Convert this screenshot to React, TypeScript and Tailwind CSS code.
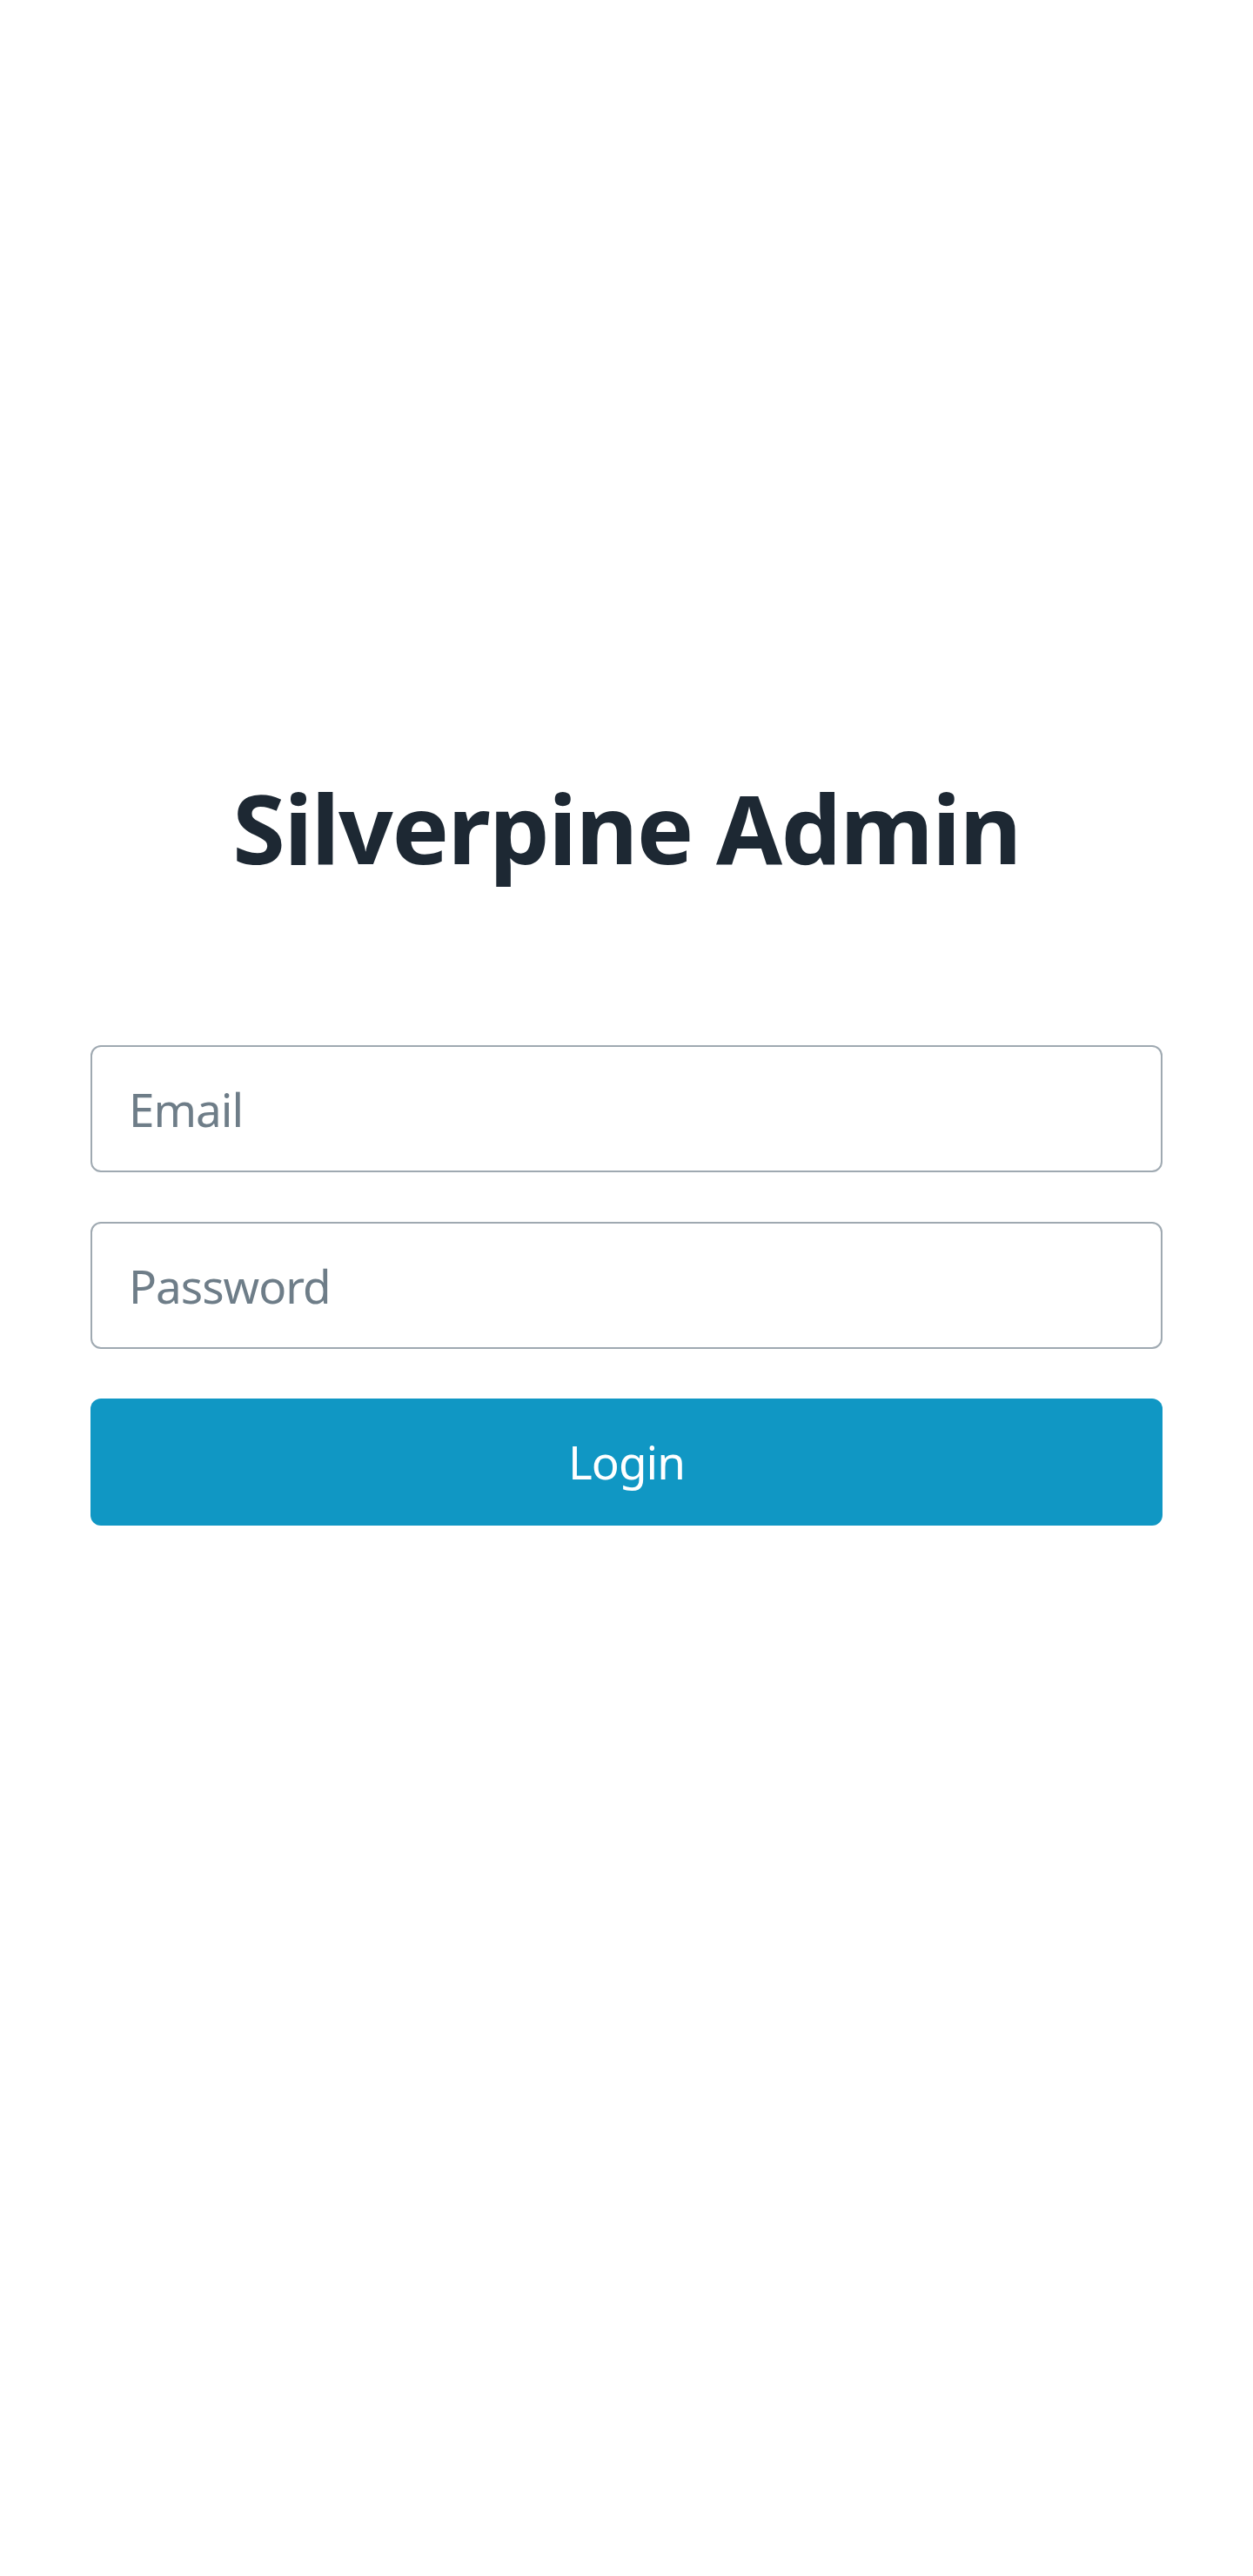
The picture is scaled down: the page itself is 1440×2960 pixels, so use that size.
export default function App() {
  return (
    <div
      className="min-h-[2960px] bg-white px-[104px] pt-[883px]"
      style={{ fontFamily: '"Noto Sans", "Open Sans", sans-serif' }}
    >
      {/* Title */}
      <h1 className="text-center text-[110px] leading-[134px] font-bold tracking-[-1.5px] text-[#1d2833]">
        Silverpine Admin
      </h1>

      {/* Form */}
      <form className="mt-[184px] flex flex-col gap-[57px]">
        <input
          type="email"
          placeholder="Email"
          className="h-[146px] w-full rounded-[12px] border-2 border-[#9fa9b1] bg-white px-[42px] text-[53px] tracking-[-1px] text-[#1d2833] outline-none placeholder:text-[#6e7d88]"
        />
        <input
          type="password"
          placeholder="Password"
          className="h-[146px] w-full rounded-[12px] border-2 border-[#9fa9b1] bg-white px-[42px] text-[53px] tracking-[-1px] text-[#1d2833] outline-none placeholder:text-[#6e7d88]"
        />
        <button
          type="button"
          className="h-[146px] w-full rounded-[12px] bg-[#1097c4] text-[53px] tracking-[-1px] text-white"
        >
          Login
        </button>
      </form>
    </div>
  );
}
